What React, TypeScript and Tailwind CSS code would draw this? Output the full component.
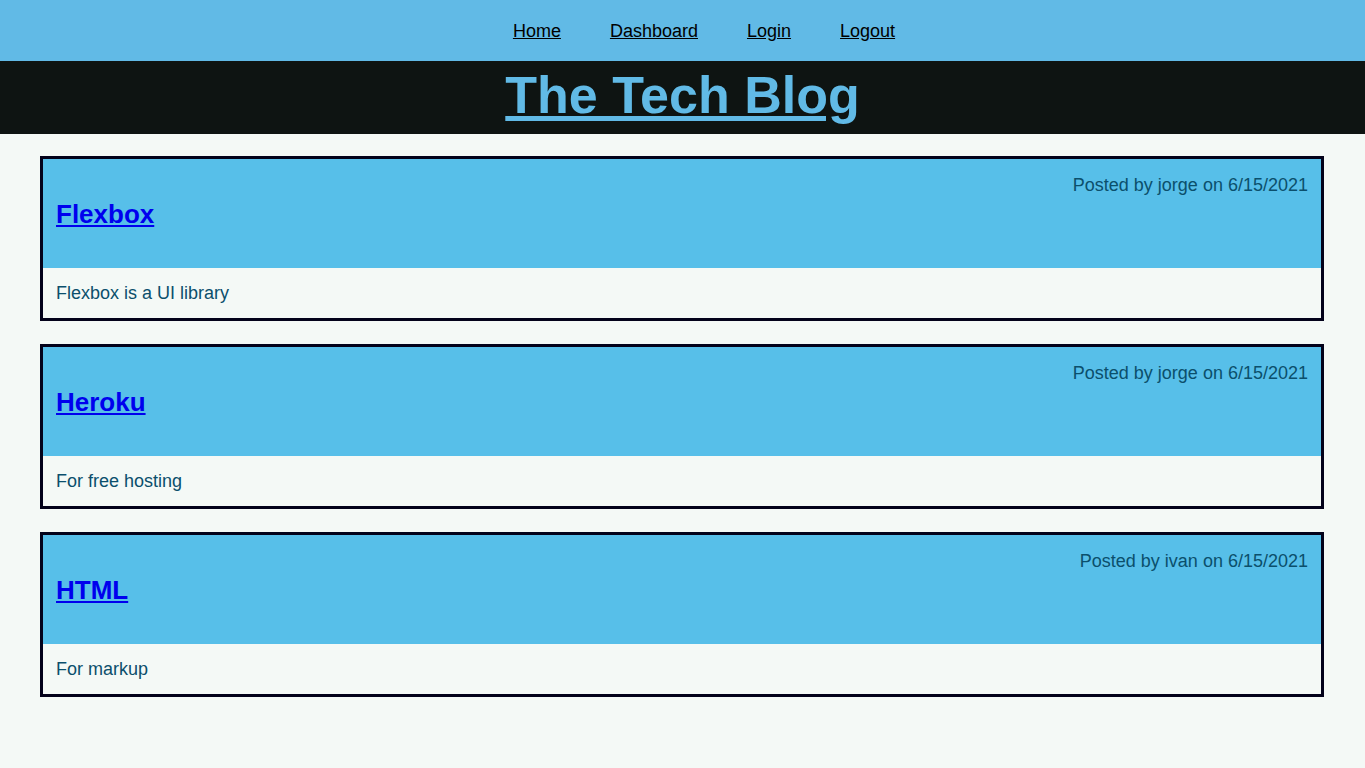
const posts = [
    { title: "Flexbox", author: "jorge", date: "6/15/2021", body: "Flexbox is a UI library" },
    { title: "Heroku", author: "jorge", date: "6/15/2021", body: "For free hosting" },
    { title: "HTML", author: "ivan", date: "6/15/2021", body: "For markup" },
];

function PostCard({ title, author, date, body }: { title: string; author: string; date: string; body: string }) {
    return (
        <article className="border-[3px] border-[#03021a]">
            <div className="bg-[#57bfe9] h-[109px] px-[13px] pt-[16px]">
                <p className="text-right text-[18px] leading-[20px] text-[#0b4f6c]">
                    Posted by {author} on {date}
                </p>
                <h2 className="mt-[4px] text-[26px] leading-[31px] font-bold">
                    <a href="#" className="text-[#0000ee] underline">{title}</a>
                </h2>
            </div>
            <div className="px-[13px] py-[14px] text-[18px] leading-[22px] text-[#0b4f6c]">
                {body}
            </div>
        </article>
    );
}

export default function App() {
    return (
        <div className="min-h-screen bg-[#f4f9f6] font-['Liberation_Sans',Arial,sans-serif]">
            <nav className="bg-[#61bae6] h-[61px] pt-[2px] pl-[43px] flex items-center justify-center gap-[49px] text-[18px]">
                {["Home", "Dashboard", "Login", "Logout"].map((l) => (
                    <a key={l} href="#" className="text-black underline">{l}</a>
                ))}
            </nav>
            <header className="bg-[#0e1412] h-[73px] pt-[4px] flex justify-center">
                <h1 className="text-[52px] leading-[60px] font-bold">
                    <a href="#" className="text-[#61bae6] underline">The Tech Blog</a>
                </h1>
            </header>
            <main className="pl-[40px] pr-[41px] pt-[22px] flex flex-col gap-[23px]">
                {posts.map((p) => (
                    <PostCard key={p.title} {...p} />
                ))}
            </main>
        </div>
    );
}
